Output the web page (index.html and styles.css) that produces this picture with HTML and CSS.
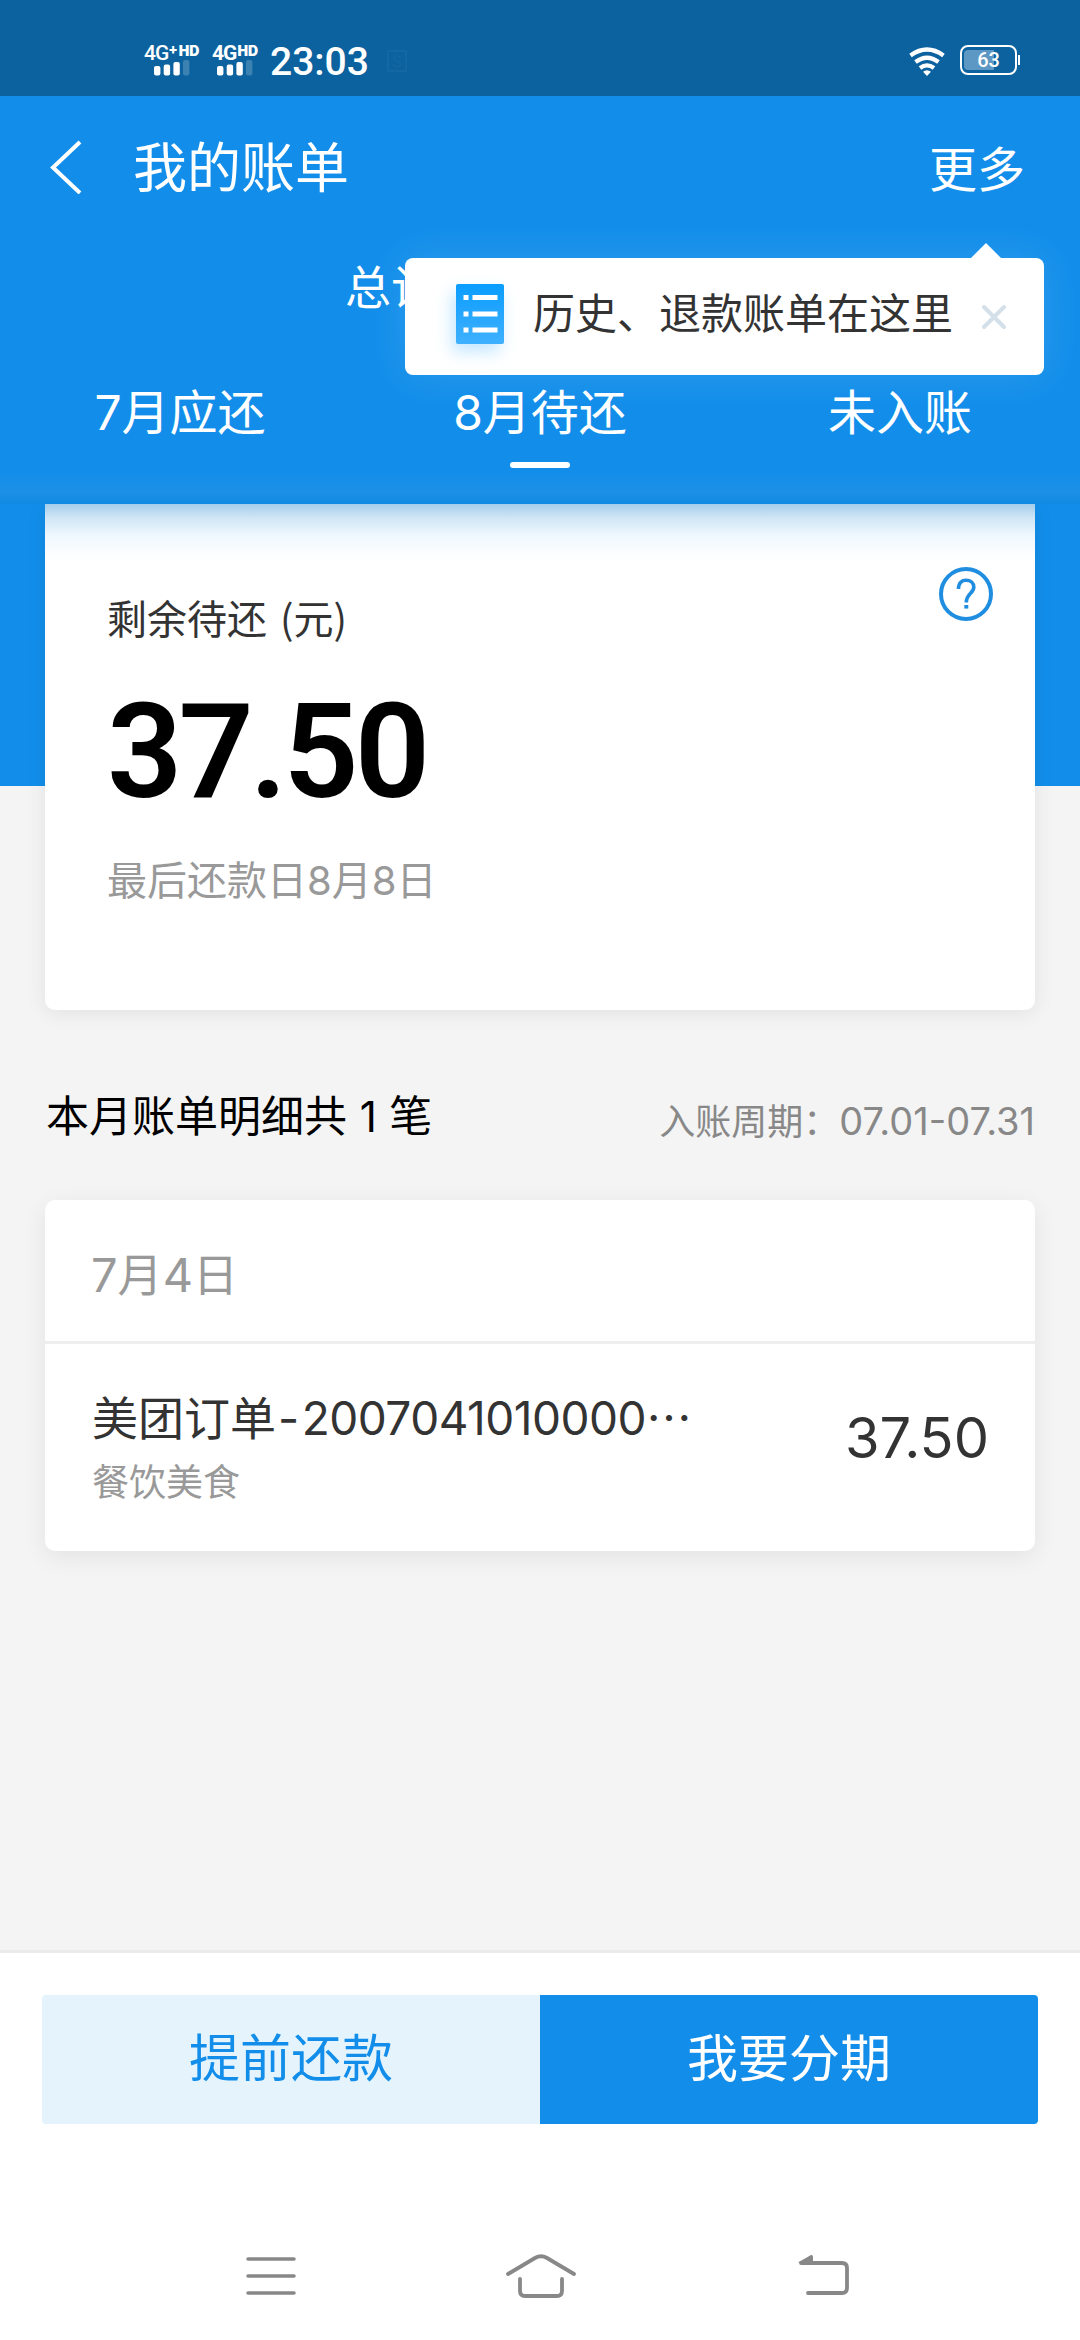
FILE: index.html
```
<!DOCTYPE html>
<html lang="zh-CN">
<head>
    <meta charset="UTF-8">
    <meta name="viewport" content="width=device-width, initial-scale=1.0">
    <title>我的账单</title>
    <link rel="stylesheet" href="styles.css">
</head>
<body>
    <div class="status-bar">
        <div class="signal">
            <div class="network"><span class="net-4g">4G</span><span class="net-plus">+</span><span class="net-hd">HD</span></div>
            <svg width="36" height="16" viewBox="0 0 36 16" fill="#fff">
                <rect x="0" y="6" width="6.4" height="9.5" rx="2"/>
                <rect x="9.7" y="4.5" width="6.4" height="11" rx="2"/>
                <rect x="19.4" y="2" width="6.4" height="13.5" rx="2"/>
                <rect x="29" y="0" width="6.4" height="15.5" rx="2" opacity=".2"/>
            </svg>
        </div>
        <div class="signal signal-second">
            <div class="network"><span class="net-4g bold">4G</span><span class="net-hd">HD</span></div>
            <svg width="36" height="16" viewBox="0 0 36 16" fill="#fff">
                <rect x="0" y="6" width="6.4" height="9.5" rx="2"/>
                <rect x="9.7" y="4.5" width="6.4" height="11" rx="2"/>
                <rect x="19.4" y="2" width="6.4" height="13.5" rx="2"/>
                <rect x="29" y="0" width="6.4" height="15.5" rx="2" opacity=".2"/>
            </svg>
        </div>
        <span class="time">23:03</span>
        <span class="app-mark">S</span>
        <svg class="wifi" width="36" height="30" viewBox="0 0 36 30" fill="none" stroke="#fff" stroke-width="4.2">
            <path d="M1.5 8.5Q18 -3.5 34.5 8.5"/>
            <path d="M6.5 15Q18 6.5 29.5 15"/>
            <path d="M11 21Q18 15.8 25 21"/>
            <path d="M14 24.8Q18 21.5 22 24.8L18 29Z" fill="#fff" stroke="none"/>
        </svg>
        <div class="battery">
            <div class="battery-level"></div>
            <span>63</span>
        </div>
    </div>

    <div class="header">
        <div class="nav-bar">
            <svg class="back" width="34" height="54" viewBox="0 0 34 54" fill="none" stroke="#fff" stroke-width="4">
                <path d="M31 2L4 27.5L31 53"/>
            </svg>
            <h1>我的账单</h1>
            <a class="more">更多</a>
        </div>
        <div class="total">总计</div>
        <div class="tabs">
            <div class="tab"><b>7</b>月应还</div>
            <div class="tab active"><b>8</b>月待还</div>
            <div class="tab">未入账</div>
        </div>
        <div class="tooltip">
            <svg class="list-icon" width="48" height="60" viewBox="0 0 48 60">
                <defs>
                    <linearGradient id="listFill" x1="0" y1="0" x2="0" y2="1">
                        <stop offset="0" stop-color="#0a9dff"/>
                        <stop offset="1" stop-color="#3fb0ff"/>
                    </linearGradient>
                </defs>
                <rect width="48" height="60" rx="2" fill="url(#listFill)"/>
                <path d="M7.5 13.5h5M16.5 13.5h25M7.5 30h5M16.5 30h25M7.5 46h5M16.5 46h25" stroke="#fff" stroke-width="5"/>
            </svg>
            <span class="tooltip-text">历史、退款账单在这里</span>
            <svg class="close" width="26" height="26" viewBox="0 0 26 26" stroke="#d3e0e9" stroke-width="4" stroke-linecap="round">
                <path d="M3 3L23 23M23 3L3 23"/>
            </svg>
        </div>
    </div>

    <div class="content">
        <div class="summary-card">
            <svg class="help" width="54" height="54" viewBox="0 0 54 54" fill="none" stroke="#1f8de0" stroke-width="4">
                <circle cx="27" cy="27" r="25"/>
                <path d="M19.500 22C19.500 15.500 23 13.200 27 13.200C31.500 13.200 34.800 16 34.800 20.300C34.800 26.500 27.300 26.500 27.300 35.500" stroke-width="3.600"/>
                <path d="M25.300 39.800h4" stroke-width="3.600"/>
            </svg>
            <div class="label">剩余待还 (元)</div>
            <div class="amount">37.50</div>
            <div class="due">最后还款日<b>8</b>月<b>8</b>日</div>
        </div>

        <div class="section-title">
            <h2>本月账单明细共 <b>1</b> 笔</h2>
            <span class="period">入账周期：<b>07.01-07.31</b></span>
        </div>

        <div class="bill-card">
            <div class="bill-date"><b>7</b>月<b>4</b>日</div>
            <div class="bill-item">
                <div class="bill-info">
                    <div class="bill-name">美团订单<b class="dash">-</b><b>2007041010000</b>⋯</div>
                    <div class="bill-type">餐饮美食</div>
                </div>
                <div class="bill-price">37.50</div>
            </div>
        </div>
    </div>

    <div class="footer">
        <button class="btn btn-repay">提前还款</button>
        <button class="btn btn-installment">我要分期</button>
    </div>

    <div class="system-nav">
        <svg width="52" height="44" viewBox="0 0 52 44" fill="none" stroke="#888" stroke-width="3.500" stroke-linecap="round">
            <path d="M3 5h46M3 22h46M3 39h46"/>
        </svg>
        <svg class="home" width="72" height="46" viewBox="0 0 72 46" fill="none" stroke="#888" stroke-width="3.800" stroke-linecap="round">
            <path d="M3 21L30 5Q36 1.500 42 5L69 21"/>
            <path d="M15 26V38Q15 43 20 43H52Q57 43 57 38V26"/>
        </svg>
        <svg class="return" width="52" height="44" viewBox="0 0 52 44" fill="none" stroke="#888" stroke-width="3.800" stroke-linecap="round">
            <path d="M3 9H44Q49 9 49 14V34Q49 39 44 39H10"/>
            <path d="M0 8.500L13 1Q15 0.500 15 3V10.500Z" fill="#888" stroke="none"/>
        </svg>
    </div>
</body>
</html>
```
FILE: styles.css
```
* {
    box-sizing: border-box;
}
body {
    margin: 0;
    width: 1080px;
    height: 2340px;
    display: flex;
    flex-direction: column;
    font-family: "Noto Sans CJK SC", sans-serif;
    background-color: #f4f4f4;
    overflow: hidden;
}
/* 数字使用 Inter */
b {
    font-family: Inter, sans-serif;
    font-weight: 400;
}
.status-bar {
    flex: none;
    display: flex;
    align-items: flex-start;
    height: 96px;
    padding: 44px 63px 0 144px;
    background-color: #0b629f;
    color: #fff;
    font-family: Inter, sans-serif;
}
.signal {
    width: 57px;
}
.signal svg {
    display: block;
    margin-left: 9.500px;
}
.signal-second {
    width: 48px;
    margin-left: 11px;
}
.signal-second svg {
    margin-left: 5px;
}
.network {
    display: flex;
    height: 16px;
    line-height: 12px;
    white-space: nowrap;
}
.net-4g {
    font: 500 21px/18px Roboto, sans-serif;
    letter-spacing: -1px;
}
.net-4g.bold {
    font-weight: 700;
}
.net-plus {
    font-size: 14px;
    font-weight: 800;
    line-height: 9px;
}
.net-hd {
    font-size: 14px;
    font-weight: 900;
    line-height: 13px;
    margin-left: 1px;
}
.time {
    margin-left: 10px;
    font: 500 39px/36px Roboto, sans-serif;
}
.app-mark {
    width: 20px;
    height: 22px;
    margin: 6px 0 0 18px;
    border: 2px solid #fff;
    font-size: 16px;
    line-height: 18px;
    text-align: center;
    opacity: 0.03;
}
.wifi {
    margin: 3px 15px 0 auto;
}
.battery {
    position: relative;
    width: 57px;
    height: 30px;
    margin-top: 1px;
    border: 2px solid #fff;
    border-radius: 8px;
    font: 500 20px/27px Roboto, sans-serif;
    text-align: center;
}
.battery span {
    position: relative;
}
.battery::after {
    content: "";
    position: absolute;
    right: -5px;
    top: 8px;
    width: 2px;
    height: 10px;
    background-color: #fff;
}
.battery-level {
    position: absolute;
    left: 2px;
    top: 3px;
    width: 30px;
    height: 20px;
    border-radius: 4px 0 0 4px;
    background-color: #5d97c3;
}
.header {
    position: relative;
    flex: none;
    z-index: 1;
    height: 408px;
    background: linear-gradient(#128eea 375px, #1c90e6 395px, #128ae2 408px);
    color: #fff;
}
.nav-bar {
    display: flex;
    align-items: center;
    height: 144px;
    padding: 0 55px 0 49px;
}
.back {
    margin-top: -2px;
}
h1 {
    margin: -6px 0 0 50px;
    font-size: 54px;
    font-weight: 400;
    line-height: 80px;
}
.more {
    margin-left: auto;
    font-size: 48px;
    padding-bottom: 5px;
}
.total {
    height: 88px;
    padding-left: 345px;
    font-size: 46px;
    line-height: 88px;
}
.tabs {
    display: flex;
}
.tab {
    flex: 1;
    height: 136px;
    padding-top: 45px;
    font-size: 48px;
    line-height: 72px;
    text-align: center;
}
.tab.active::after {
    content: "";
    display: block;
    width: 60px;
    height: 6px;
    margin: 13px auto 0;
    border-radius: 3px;
    background-color: #fff;
}
.tooltip {
    position: absolute;
    left: 405px;
    top: 162px;
    width: 639px;
    height: 117px;
    display: flex;
    align-items: center;
    padding: 0 37px 5px 51px;
    border-radius: 8px;
    background-color: #fff;
    color: #333;
    box-shadow: 0 0 40px rgba(255,255,255,0.12);
}
.tooltip::before {
    content: "";
    position: absolute;
    right: 43px;
    top: -15px;
    border: 15px solid transparent;
    border-top: 0;
    border-bottom-color: #fff;
}
.list-icon {
    filter: drop-shadow(-4px 8px 8px rgba(60,175,255,0.3));
}
.tooltip-text {
    margin: -8px 0 0 29px;
    font-size: 42px;
}
.close {
    margin: 5px 0 0 auto;
}
.content {
    flex: 1;
    padding: 0 45px;
    background: linear-gradient(#128eea 282px, #f4f4f4 282px);
}
.summary-card {
    position: relative;
    height: 506px;
    padding: 77px 62px 0;
    border-radius: 0 0 10px 10px;
    background: linear-gradient(#a5cdeb, #d0e6f5 14px, #f0f8fe 32px, #fff 56px);
    box-shadow: 0 3px 20px rgba(0,0,0,0.08);
}
.help {
    position: absolute;
    right: 42px;
    top: 63px;
}
.label {
    font-size: 40px;
    line-height: 72px;
    word-spacing: 4px;
    color: #333;
}
.amount {
    margin-top: 23px;
    font: 600 132px/152px Roboto, sans-serif;
    letter-spacing: -4px;
    color: #000;
}
.due {
    margin-top: 14px;
    font-size: 40px;
    line-height: 72px;
    color: #999;
}
.section-title {
    display: flex;
    justify-content: space-between;
    align-items: center;
    height: 190px;
    padding-top: 16px;
}
h2 {
    margin: 0 0 0 1px;
    font-size: 43px;
    font-weight: 400;
    word-spacing: 3px;
    color: #000;
}
h2 b {
    font-size: 42px;
}
.period {
    padding-top: 12px;
    font-size: 36px;
    color: #888;
}
.period b {
    font-size: 38px;
}
.bill-card {
    border-radius: 10px;
    background-color: #fff;
    box-shadow: 0 6px 24px rgba(0,0,0,0.07);
}
.bill-date {
    height: 144px;
    padding-left: 46px;
    border-bottom: 3px solid #eee;
    font-size: 45px;
    line-height: 145px;
    color: #999;
}
.bill-date b {
    font-size: 47px;
}
.bill-item {
    display: flex;
    justify-content: space-between;
    height: 207px;
    padding: 37px 46px 0 47px;
    color: #333;
}
.bill-name {
    font-size: 46px;
    line-height: 68px;
}
.bill-name b {
    letter-spacing: -0.5px;
}
.bill-name .dash {
    margin: 0 3px 0 2px;
}
.bill-type {
    font-size: 37px;
    line-height: 56px;
    color: #999;
}
.bill-price {
    font: 400 56px/114px Inter, sans-serif;
}
.footer {
    flex: none;
    display: flex;
    height: 234px;
    padding: 42px 42px 0;
    border-top: 3px solid #ebebeb;
    background-color: #fff;
}
.btn {
    flex: 1;
    height: 129px;
    padding: 0 0 9px;
    border: none;
    font-family: inherit;
    font-size: 51px;
}
.btn-repay {
    border-radius: 4px 0 0 4px;
    background-color: #e5f4fc;
    color: #128eea;
}
.btn-installment {
    border-radius: 0 4px 4px 0;
    background-color: #128eea;
    color: #fff;
}
.system-nav {
    flex: none;
    display: flex;
    align-items: center;
    height: 156px;
    padding: 28px 0 0 245px;
    background-color: #fff;
}
.home {
    margin-left: 208px;
}
.return {
    margin-left: 221px;
}
```
